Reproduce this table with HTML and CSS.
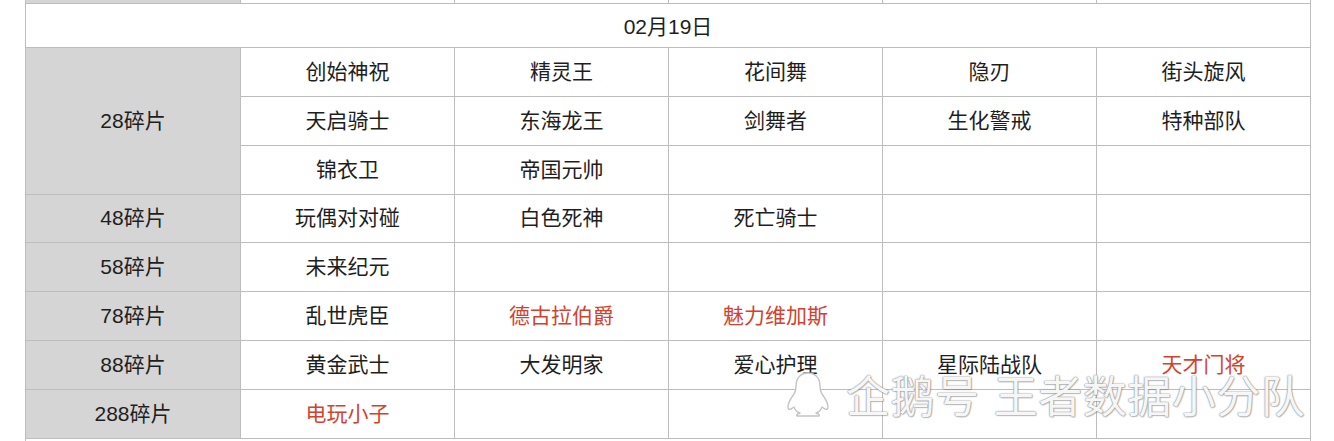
FILE: index.html
```html
<!DOCTYPE html>
<html lang="zh-CN">
<head>
<meta charset="utf-8">
<title>碎片兑换</title>
<link rel="stylesheet" href="styles.css">
</head>
<body>
<div class="page">
  <table class="grid">
    <colgroup>
      <col class="c-label"><col class="c"><col class="c"><col class="c"><col class="c"><col class="c">
    </colgroup>
    <tbody>
      <tr class="partial"><td class="label"></td><td></td><td></td><td></td><td></td><td></td></tr>
      <tr class="head"><td colspan="6">02月19日</td></tr>
      <tr><td class="label" rowspan="3">28碎片</td><td>创始神祝</td><td>精灵王</td><td>花间舞</td><td>隐刃</td><td>街头旋风</td></tr>
      <tr><td>天启骑士</td><td>东海龙王</td><td>剑舞者</td><td>生化警戒</td><td>特种部队</td></tr>
      <tr><td>锦衣卫</td><td>帝国元帅</td><td></td><td></td><td></td></tr>
      <tr><td class="label">48碎片</td><td>玩偶对对碰</td><td>白色死神</td><td>死亡骑士</td><td></td><td></td></tr>
      <tr><td class="label">58碎片</td><td>未来纪元</td><td></td><td></td><td></td><td></td></tr>
      <tr><td class="label">78碎片</td><td>乱世虎臣</td><td class="red">德古拉伯爵</td><td class="red">魅力维加斯</td><td></td><td></td></tr>
      <tr><td class="label">88碎片</td><td>黄金武士</td><td>大发明家</td><td>爱心护理</td><td>星际陆战队</td><td class="red">天才门将</td></tr>
      <tr><td class="label">288碎片</td><td class="red">电玩小子</td><td></td><td></td><td></td><td></td></tr>
      <tr class="tail"><td colspan="6"></td></tr>
    </tbody>
  </table>
  <div class="watermark">
    <svg class="penguin" width="48" height="46" viewBox="0 0 48 46">
      <path fill="#fff" stroke="#c4c4c4" stroke-width="1.4" stroke-linejoin="round" d="M24 2c-8 0-12 6-12 13 0 3 0 5-2 8-3 4-6 8-6 13 0 2 1 3 3 2l3-2c1 3 3 5 6 6-3 1-4 2-3 3h22c1-1 0-2-3-3 3-1 5-3 6-6l3 2c2 1 3 0 3-2 0-5-3-9-6-13-2-3-2-5-2-8 0-7-4-13-12-13z"/>
    </svg>
    <span class="wm-text">企鹅号 王者数据小分队</span>
  </div>
</div>
</body>
</html>
```

FILE: styles.css
```css
html, body {
  margin: 0;
  padding: 0;
  background: #fff;
}
.page {
  position: relative;
  width: 1334px;
  height: 441px;
  overflow: hidden;
}
.grid {
  border-collapse: collapse;
  table-layout: fixed;
  width: 1286px;
  margin: -17px 0 0 25px;
  font-family: "Liberation Sans", "Noto Sans CJK SC", sans-serif;
  font-size: 21px;
  color: #1e1e1e;
}
.c-label { width: 215px; }
.c { width: 214px; }
.grid td {
  border: 1px solid #bdbdbd;
  height: 47.85px;
  padding: 0;
  text-align: center;
  vertical-align: middle;
  line-height: 24px;
}
.grid td.label {
  background: #d5d5d5;
}
.grid td.red {
  color: #d2432f;
}
.grid tr.partial td {
  height: 19px;
}
.grid tr.head td {
  height: 41px;
  padding-top: 2px;
}
.watermark {
  position: absolute;
  left: 784px;
  top: 370px;
  display: flex;
  align-items: center;
  gap: 14px;
}
.wm-text {
  font-family: "Noto Sans CJK SC", sans-serif;
  font-size: 44px;
  line-height: 48px;
  color: rgba(255, 255, 255, 0.95);
  letter-spacing: 0.5px;
  word-spacing: 4px;
  text-shadow: 0 0 1px #7a7a7a, 0 0 2px #a0a0a0, 1px 1px 1px rgba(0,0,0,0.2);
}
```
